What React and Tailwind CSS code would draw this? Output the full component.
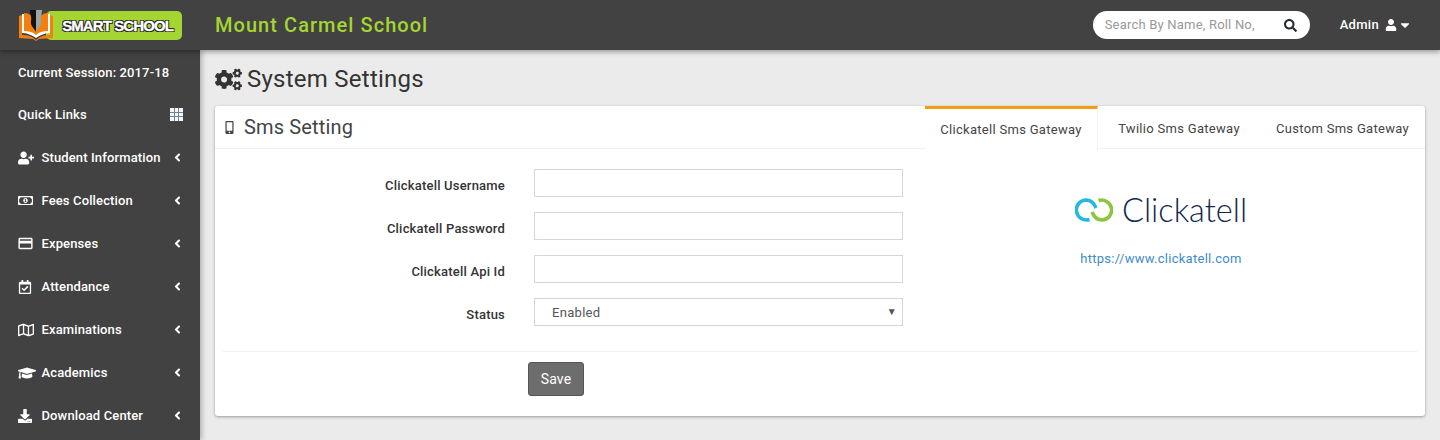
import React from 'react'
import {
  FaCogs, FaMobileAlt, FaUserPlus, FaRegMoneyBillAlt, FaRegCalendarCheck,
  FaRegMap, FaGraduationCap, FaDownload, FaAngleLeft, FaSearch, FaUser, FaCaretDown,
} from 'react-icons/fa'
import { MdCreditCard } from 'react-icons/md'

const menu = [
  { label: 'Student Information', icon: FaUserPlus, size: 'text-[16px]' },
  { label: 'Fees Collection', icon: FaRegMoneyBillAlt, size: 'text-[15px]' },
  { label: 'Expenses', icon: MdCreditCard, size: 'text-[17px] -ml-[1px]' },
  { label: 'Attendance', icon: FaRegCalendarCheck, size: 'text-[14px]' },
  { label: 'Examinations', icon: FaRegMap, size: 'text-[16px]' },
  { label: 'Academics', icon: FaGraduationCap, size: 'text-[18px]' },
  { label: 'Download Center', icon: FaDownload, size: 'text-[14px]' },
]

function Logo() {
  return (
    <div className="relative w-[164px] h-[29px]">
      <div className="absolute left-[28px] top-0 right-0 h-[29px] rounded-[5px] bg-[#a5d533] flex items-center justify-end pr-[9px]">
        <span className="font-['Liberation_Sans',sans-serif] font-bold text-[15px] leading-none text-white tracking-[-0.9px] [-webkit-text-stroke:0.3px_#fff] [text-shadow:1px_1px_0_#222,-1px_-1px_0_#222,1px_-1px_0_#222,-1px_1px_0_#222]">
          SMART SCHOOL
        </span>
      </div>
      <svg className="absolute left-0 -top-[1px]" width="36" height="31" viewBox="0 0 36 31">
        <path d="M1 6l3-1v20c5 0 10 1 14 5 4-4 9-5 14-5V5l3 1v22l-14 1-3 2-3-2-14-1z" fill="#f47f0e" />
        <path d="M4 4h1c5 0 10 3 13 8v16c-4-3-9-5-14-5z" fill="#fff" />
        <path d="M32 4h-1c-5 0-10 3-13 8v16c4-3 9-5 14-5z" fill="#fff" />
        <path d="M6 3c5 0 9 3 12 8v14c-3-3-7-4-12-4z" fill="#f47f0e" />
        <path d="M30 3c-5 0-9 3-12 8v14c3-3 7-4 12-4z" fill="#f47f0e" />
        <path d="M12 0h6v22c-1-3-6-6-5-11 1-3-1-7-1-11z" fill="#111" />
        <path d="M18 0h6c0 4-2 8-1 11 1 5-4 8-5 11z" fill="#9aa7a7" />
      </svg>
    </div>
  )
}

function ClickatellLogo() {
  return (
    <div className="flex items-center gap-[9px]">
      <svg width="38" height="26" viewBox="0 0 38 26" fill="none" strokeWidth="3.6">
        <path d="M14.5 22.5A10 10 0 1 1 11 3C15 3 19 6 21 11" stroke="#22b8e0" />
        <path d="M14.5 22.5A10 10 0 1 1 11 3C15 3 19 6 21 11" stroke="#8cc63f" transform="rotate(180 19 13)" />
      </svg>
      <span className="font-['Lato',sans-serif] font-light text-[32.5px] leading-none text-[#12284c]">Clickatell</span>
    </div>
  )
}

function Field({ label }) {
  return (
    <div className="flex items-center h-[28px] mb-[15px]">
      <label className="w-[290px] text-right text-[13px] font-medium tracking-[0.2px] text-[#333] pt-[5px]">{label}</label>
      <input className="ml-[29px] w-[369px] h-[28px] border border-[#d2d6de] bg-white" />
    </div>
  )
}

export default function App() {
  return (
    <div className="h-[440px] overflow-hidden bg-[#ebebeb] font-['Roboto',sans-serif] flex flex-col">
      <header className="relative z-20 h-[50px] shrink-0 bg-[#424242] flex items-center shadow-[0_2px_5px_rgba(0,0,0,0.35)]">
        <div className="w-[200px] pl-[18px]">
          <Logo />
        </div>
        <div className="ml-[15px] text-[20px] font-medium tracking-[1.05px] text-[#a5d533]">Mount Carmel School</div>
        <div className="ml-auto flex items-center">
          <div className="w-[217px] h-[28px] rounded-[14px] bg-white flex items-center pl-[12px] pr-[13px]">
            <span className="text-[13px] text-[#999] tracking-[0.2px]">Search By Name, Roll No,</span>
            <FaSearch className="ml-auto text-[13px] text-[#222d32]" />
          </div>
          <div className="ml-[30px] mr-[28px] flex items-center text-white">
            <span className="text-[13px] font-medium tracking-[0.3px]">Admin</span>
            <FaUser className="ml-[6px] text-[12px]" />
            <FaCaretDown className="ml-[1px] text-[14px]" />
          </div>
        </div>
      </header>

      <div className="flex flex-1 min-h-0">
        <aside className="relative z-10 w-[200px] shrink-0 bg-[#424242] text-white text-[13px] font-medium tracking-[0.13px] shadow-[2px_0_5px_rgba(0,0,0,0.25)] pl-[18px]">
          <div className="h-[43px] mt-[1px] flex items-center">Current Session: 2017-18</div>
          <div className="h-[43px] -mt-[1px] flex items-center pr-[17px]">
            <span>Quick Links</span>
            <svg className="ml-auto" width="13" height="13" viewBox="0 0 13 13">
              <rect width="13" height="13" fill="#f2f7fb" />
              <path d="M4.5 0v13M8.5 0v13M0 4.5h13M0 8.5h13" stroke="#6f8296" strokeWidth="1" />
            </svg>
          </div>
          {menu.map(item => (
            <div key={item.label} className="h-[43px] flex items-center">
              <span className="w-[23.5px] flex items-center">
                <item.icon className={item.size} />
              </span>
              <span>{item.label}</span>
              <FaAngleLeft className="absolute left-[171px] text-[13px]" />
            </div>
          ))}
        </aside>

        <main className="flex-1 min-w-0 px-[15px]">
          <div className="h-[56px] pt-[2px] flex items-center">
            <FaCogs className="text-[27px] text-[#333]" />
            <h1 className="ml-[5px] text-[24px] text-[#333] leading-none tracking-[0.25px]">System Settings</h1>
          </div>

          <section className="h-[310px] bg-white rounded-[3px] shadow-[0_1px_3px_rgba(0,0,0,0.35)]">
            <div className="h-[43px] flex border-b border-[#f1f1f1]">
              <div className="flex items-center pl-[8px]">
                <FaMobileAlt className="text-[13px] text-[#444]" />
                <h3 className="ml-[8px] text-[20px] text-[#444] tracking-[0.15px]">Sms Setting</h3>
              </div>
              <nav className="ml-auto flex text-[13px] text-[#444] tracking-[0.3px]">
                <div className="w-[173px] h-[44px] flex items-center justify-center border-t-[3px] border-r border-t-[#f39c12] border-r-[#f1f1f1] bg-white">
                  Clickatell Sms Gateway
                </div>
                <div className="w-[162px] pt-[3px] flex items-center justify-center">Twilio Sms Gateway</div>
                <div className="w-[165px] pt-[3px] flex items-center justify-center">Custom Sms Gateway</div>
              </nav>
            </div>

            <div className="flex pt-[20px] h-[202px]">
              <div className="w-[688px]">
                <Field label="Clickatell Username" />
                <Field label="Clickatell Password" />
                <Field label="Clickatell Api Id" />
                <div className="flex items-center h-[28px]">
                  <label className="w-[290px] text-right text-[13px] font-medium tracking-[0.2px] text-[#333] pt-[5px]">Status</label>
                  <div className="ml-[29px] w-[369px] h-[28px] pt-[1px] border border-[#d2d6de] bg-white flex items-center pl-[17px] pr-[5px] text-[13px] text-[#555] tracking-[0.3px]">
                    Enabled
                    <span className="ml-auto mb-[3px] text-[10px] text-[#555]">▼</span>
                  </div>
                </div>
              </div>
              <div className="flex-1 flex flex-col items-center pt-[25px] pr-[6px]">
                <ClickatellLogo />
                <a className="mt-[22px] text-[13px] text-[#428bca] tracking-[0.28px]">https://www.clickatell.com</a>
              </div>
            </div>

            <div className="mx-[8px] border-t border-[#f1f1f1] pt-[10px] pl-[305px]">
              <button className="w-[56px] h-[34px] rounded-[3px] bg-[#6d6d6d] border border-[#555] text-white text-[14px] tracking-[0.1px]">Save</button>
            </div>
          </section>
        </main>
      </div>
    </div>
  )
}
